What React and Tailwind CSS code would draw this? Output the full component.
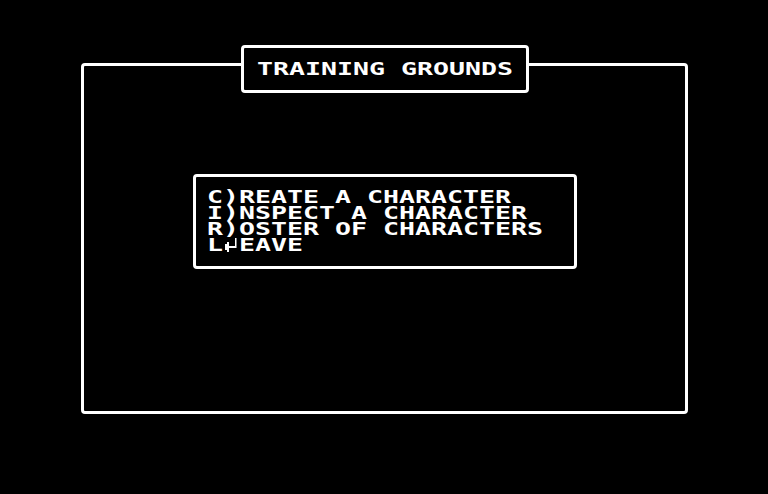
// return-arrow glyph as a 6x7 pixel bitmap
const ARROW = [
  '.....#',
  '.....#',
  '.#...#',
  '##...#',
  '######',
  '##....',
  '.#....',
];

function ReturnArrow() {
  return (
    <svg
      viewBox="0 0 6 7"
      preserveAspectRatio="none"
      className="inline-block align-top mt-[1px] ml-[0.7px] mr-[2px] w-[8.13px] h-[14px]"
      shapeRendering="crispEdges"
    >
      {ARROW.flatMap((row, y) =>
        row.split('').map((c, x) =>
          c === '#' ? <rect key={`${x}-${y}`} x={x} y={y} width="1" height="1" fill="white" /> : null
        )
      )}
    </svg>
  );
}

export default function App() {
  const menu = [
    'C)REATE A CHARACTER',
    'I)NSPECT A CHARACTER',
    'R)OSTER OF CHARACTERS',
  ];

  return (
    <div className="w-[768px] h-[494px] bg-black text-white overflow-hidden pt-[63px] pl-[81px] font-['DejaVu_Sans_Mono',monospace] font-bold">
      {/* outer frame */}
      <div className="w-[607px] h-[351px] border-[3px] border-white rounded-[4px] flex flex-col items-center">
        {/* title plate sits on the top edge */}
        <div className="-mt-[21px] w-[288px] h-[48px] bg-black border-[3px] border-white rounded-[4px] pt-[13px]">
          <div className="text-[18px] leading-[16px] whitespace-pre text-center scale-x-[1.476] origin-center">
            TRAINING GROUNDS
          </div>
        </div>

        {/* command menu */}
        <div className="mt-[81px] w-[384px] border-[3px] border-white rounded-[4px] pl-[11px] pt-[12px] pb-[13px]">
          {menu.map((line) => (
            <div
              key={line}
              className="text-[18px] leading-[16px] whitespace-pre scale-x-[1.476] origin-left"
            >
              {line}
            </div>
          ))}
          <div className="text-[18px] leading-[16px] whitespace-pre scale-x-[1.476] origin-left">
            L<ReturnArrow />EAVE
          </div>
        </div>
      </div>
    </div>
  );
}
